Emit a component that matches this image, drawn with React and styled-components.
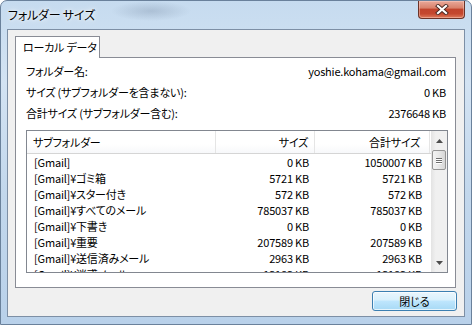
import React from "react";
import styled, { createGlobalStyle } from "styled-components";

const GlobalStyle = createGlobalStyle`
  html, body { margin: 0; padding: 0; background: #fff; }
  body {
    font-family: "Noto Sans CJK JP", "Noto Sans", sans-serif;
    font-size: 11px;
    letter-spacing: -0.2px;
    font-feature-settings: "palt";
    color: #000;
  }
`;

const Window = styled.div`
  width: 472px;
  height: 325px;
  box-sizing: border-box;
  display: flex;
  flex-direction: column;
  border: 1px solid #6a819b;
  border-radius: 7px 7px 0 0;
  overflow: hidden;
  background:
    radial-gradient(ellipse 40px 10px at 150px 10px, rgba(120, 140, 165, 0.35), transparent),
    linear-gradient(180deg, #c6dbef 0%, #d3e3f3 25%, #c2d7ec 60%, #b9d1ea 100%);
`;

const TitleBar = styled.div`
  height: 28px;
  flex: none;
  display: flex;
  justify-content: space-between;
  align-items: flex-start;
  padding-left: 7px;
`;

const Title = styled.span`
  line-height: 27px;
  font-size: 12px;
  color: #000;
  text-shadow: 0 0 6px rgba(255, 255, 255, 0.95), 0 0 3px rgba(255, 255, 255, 0.9);
`;

const CloseButton = styled.div`
  width: 47px;
  height: 18px;
  margin-right: 6px;
  box-sizing: border-box;
  display: flex;
  align-items: center;
  justify-content: center;
  border: 1px solid #6b3328;
  border-top: none;
  border-radius: 0 0 4px 4px;
  background: linear-gradient(180deg, #e9a99a 0%, #d9826c 40%, #c1442c 50%, #c4472e 75%, #de7b5c 100%);
  box-shadow: inset 0 0 0 1px rgba(255, 210, 200, 0.45);
`;

const Client = styled.div`
  flex: 1;
  margin: 0 6px 7px 6px;
  box-sizing: border-box;
  border: 1px solid #7d8fa5;
  background: #f0f0f0;
  padding: 6px 8px 0 7px;
  display: flex;
  flex-direction: column;
`;

const Tab = styled.div`
  align-self: flex-start;
  width: 85px;
  height: 22px;
  box-sizing: border-box;
  border: 1px solid #898c95;
  border-bottom: none;
  background: #fff;
  padding-left: 7px;
  line-height: 21px;
  white-space: nowrap;
  margin-bottom: -1px;
  position: relative;
  z-index: 1;
`;

const Panel = styled.div`
  height: 231px;
  box-sizing: border-box;
  border: 1px solid #898c95;
  background: #fff;
  padding: 2px 7px 0 10px;
  display: flex;
  flex-direction: column;
`;

const InfoRow = styled.div`
  height: 21px;
  display: flex;
  justify-content: space-between;
  align-items: center;
  padding-right: 2px;
  white-space: nowrap;
`;

const List = styled.div`
  margin-top: 7px;
  height: 143px;
  box-sizing: border-box;
  border: 1px solid #828790;
  display: flex;
  background: #fff;
`;

const Table = styled.div`
  flex: 1;
  overflow: hidden;
`;

const Row = styled.div`
  display: grid;
  grid-template-columns: 189px 99px 115px;
  height: ${(p) => (p.$header ? "23px" : "16px")};
  align-items: center;
  background: ${(p) => (p.$header ? "linear-gradient(180deg, #fff 0%, #fff 60%, #f7f8fa 100%)" : "transparent")};
  border-bottom: ${(p) => (p.$header ? "1px solid #d5d5d5" : "none")};
  box-sizing: border-box;
`;

const Cell = styled.div`
  height: 100%;
  display: flex;
  align-items: center;
  justify-content: ${(p) => (p.$right ? "flex-end" : "flex-start")};
  padding: ${(p) => p.$pad};
  border-right: ${(p) => (p.$header ? "1px solid #e5e5e5" : "none")};
  white-space: nowrap;
  box-sizing: border-box;
`;

const ScrollBar = styled.div`
  width: 16px;
  flex: none;
  display: flex;
  flex-direction: column;
  align-items: center;
  background: linear-gradient(90deg, #e3e3e3 0%, #f0f0f0 30%, #f0f0f0 100%);
`;

const Arrow = styled.div`
  height: 19px;
  width: 16px;
  flex: none;
  display: flex;
  align-items: center;
  justify-content: center;
`;

const Thumb = styled.div`
  width: 14px;
  height: 20px;
  box-sizing: border-box;
  border: 1px solid #959595;
  border-radius: 2px;
  background: linear-gradient(90deg, #f3f3f3 0%, #e8e8e8 50%, #d6d6d6 100%);
  display: flex;
  flex-direction: column;
  align-items: center;
  justify-content: center;
  gap: 1px;
`;

const Grip = styled.div`
  width: 6px;
  height: 1px;
  background: #6e6e6e;
  box-shadow: 0 1px 0 #fff;
`;

const Spacer = styled.div`
  flex: 1;
`;

const ButtonRow = styled.div`
  display: flex;
  justify-content: flex-end;
  margin-top: 3px;
  margin-right: -1px;
`;

const Button = styled.button`
  width: 85px;
  height: 20px;
  box-sizing: border-box;
  border: 1px solid #3c7fb1;
  border-radius: 3px;
  font: inherit;
  font-size: 11px;
  color: #000;
  padding: 0;
  background: linear-gradient(180deg, #eaf6fd 0%, #d9f0fc 45%, #bee6fd 50%, #a7d9f5 100%);
  box-shadow: inset 0 0 0 1px rgba(255, 255, 255, 0.7);
`;

const rows = [
  ["[Gmail]", "0 KB", "1050007 KB"],
  ["[Gmail]¥ゴミ箱", "5721 KB", "5721 KB"],
  ["[Gmail]¥スター付き", "572 KB", "572 KB"],
  ["[Gmail]¥すべてのメール", "785037 KB", "785037 KB"],
  ["[Gmail]¥下書き", "0 KB", "0 KB"],
  ["[Gmail]¥重要", "207589 KB", "207589 KB"],
  ["[Gmail]¥送信済みメール", "2963 KB", "2963 KB"],
  ["[Gmail]¥迷惑メール", "13183 KB", "13183 KB"],
];

function CloseIcon() {
  return (
    <svg width="14" height="11" viewBox="0 0 14 11">
      <path d="M3 2 L11 9 M11 2 L3 9" stroke="#4a2a24" strokeWidth="4" strokeLinecap="square" />
      <path d="M3 2 L11 9 M11 2 L3 9" stroke="#fff" strokeWidth="2.2" strokeLinecap="square" />
    </svg>
  );
}

function TriUp() {
  return (
    <svg width="7" height="4" viewBox="0 0 7 4">
      <path d="M0 4 L3.5 0 L7 4 Z" fill="#4d4d4d" />
    </svg>
  );
}

function TriDown() {
  return (
    <svg width="7" height="4" viewBox="0 0 7 4">
      <path d="M0 0 L3.5 4 L7 0 Z" fill="#4d4d4d" />
    </svg>
  );
}

export default function App() {
  return (
    <>
      <GlobalStyle />
      <Window>
        <TitleBar>
          <Title>フォルダー サイズ</Title>
          <CloseButton>
            <CloseIcon />
          </CloseButton>
        </TitleBar>
        <Client>
          <Tab>ローカル データ</Tab>
          <Panel>
            <InfoRow>
              <span>フォルダー名:</span>
              <span>yoshie.kohama@gmail.com</span>
            </InfoRow>
            <InfoRow>
              <span>サイズ (サブフォルダーを含まない):</span>
              <span>0 KB</span>
            </InfoRow>
            <InfoRow>
              <span>合計サイズ (サブフォルダー含む):</span>
              <span>2376648 KB</span>
            </InfoRow>
            <List>
              <Table>
                <Row $header>
                  <Cell $header $pad="0 0 0 6px">サブフォルダー</Cell>
                  <Cell $header $right $pad="0 6px 0 0">サイズ</Cell>
                  <Cell $header $right $pad="0 9px 0 0">合計サイズ</Cell>
                </Row>
                {rows.map(([name, size, total]) => (
                  <Row key={name}>
                    <Cell $pad="0 0 0 7px">{name}</Cell>
                    <Cell $right $pad="0 6px 0 0">{size}</Cell>
                    <Cell $right $pad="0 8px 0 0">{total}</Cell>
                  </Row>
                ))}
              </Table>
              <ScrollBar>
                <Arrow>
                  <TriUp />
                </Arrow>
                <Thumb>
                  <Grip />
                  <Grip />
                  <Grip />
                </Thumb>
                <Spacer />
                <Arrow>
                  <TriDown />
                </Arrow>
              </ScrollBar>
            </List>
          </Panel>
          <ButtonRow>
            <Button>閉じる</Button>
          </ButtonRow>
        </Client>
      </Window>
    </>
  );
}
